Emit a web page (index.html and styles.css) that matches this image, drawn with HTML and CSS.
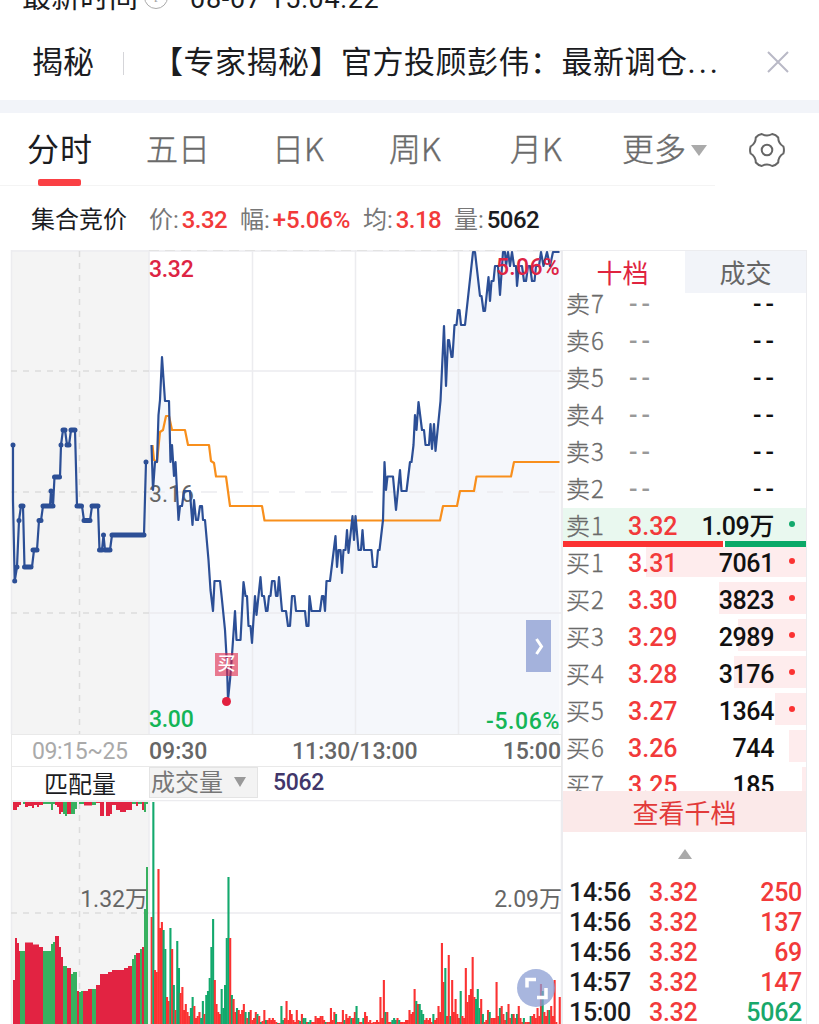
FILE: index.html
```html
<!DOCTYPE html>
<html lang="zh-CN">

<head>
	<meta charset="UTF-8">
	<title>分时</title>
	<link rel="stylesheet" href="styles.css">
</head>

<body>
	<div class="update">
		<span class="update-label">最新时间</span>
		<span class="info">i</span>
		<span class="update-time">08-07 15:04:22</span>
	</div>

	<div class="notice">
		<span class="notice-tag">揭秘</span>
		<span class="notice-line"></span>
		<span class="notice-text">【专家揭秘】官方投顾彭伟：最新调仓<span class="dots">...</span></span>
		<svg class="close" width="24" height="24" viewBox="0 0 24 24"><path d="M2 2 22 22M22 2 2 22" /></svg>
	</div>

	<div class="tabs">
		<span class="tab active">分时</span>
		<span class="tab">五日</span>
		<span class="tab">日K</span>
		<span class="tab">周K</span>
		<span class="tab">月K</span>
		<span class="tab more">更多<i class="caret"></i></span>
		<svg class="gear" width="38" height="38" viewBox="-19 -19 38 38">
			<path d="M16.400-3.500Q17.500 0 16.400 3.500Q11.300 6.500 11.200 12.500Q8.800 15.300 5.200 16Q0 13-5.200 16Q-8.800 15.300-11.200 12.500Q-11.300 6.500-16.400 3.500Q-17.500 0-16.400-3.500Q-11.300-6.500-11.200-12.500Q-8.800-15.300-5.200-16Q0-13 5.200-16Q8.800-15.300 11.200-12.500Q11.300-6.500 16.400-3.500Z" />
			<circle r="5.3" />
		</svg>
	</div>

	<div class="summary">
		<span class="summary-name">集合竞价</span>
		<span class="item">价:<b class="up">3.32</b></span>
		<span class="item wide">幅:<b class="up">+5.06%</b></span>
		<span class="item">均:<b class="up">3.18</b></span>
		<span class="item">量:<b>5062</b></span>
	</div>

	<div class="main">
		<div class="charts">
			<div class="price-chart">
				<svg width="552" height="484" viewBox="10 250 552 484">
					<rect class="pre-bg" x="11" y="250" width="138" height="484" />
					<path class="area" id="area" />
					<path class="grid" d="M149 371H562M149 613H562M252.5 250V734M355.5 250V734M458.5 250V734" />
					<path class="grid frame" d="M11 251H562M11.5 250V734M149 250V734M561.5 250V734" />
					<path class="grid dash-long" d="M149 492H562" />
					<path class="grid dash-top" d="M149 250H562" />
					<path class="grid dash" d="M11 371H149M11 492H149M11 613H149M79.5 251V734" />
					<text class="mid" x="149" y="502">3.16</text>
					<path class="avg" d="M152.500 445L154 460L157 462L160 432L163 430L166 416H169L172 430H185L188 445H209L211 461L214 463L216 476.500H226L230 506H262L264.500 520.500H440L443 506H457L460 491H474L476.500 476.500H511L514 462H559.500" />
					<path class="price" id="pre" />
					<path class="price-dots" d="M13 445h0M14.700 581h0M17 567h0M19 520.500h0M21 506H23M24.500 567H31M33 550H37M39 520.500H41M43 506H53M51 491h0M54.500 477H59.500M61 445h0M63 430H65M67 445H69M71 430H75M77 506H81.500M84 520.500H90M92 506H98M99.500 550H102M103.500 535h0M105 550H110M112 535H144M146 462h0" />
					<path class="price" id="price" />
				</svg>
				<span class="lab high">3.32</span>
				<span class="lab high-pct">5.06%</span>
				<span class="lab low">3.00</span>
				<span class="lab low-pct">-5.06%</span>
				<span class="buy">买</span>
				<span class="buy-dot"></span>
				<svg class="expand" width="25" height="52" viewBox="0 0 25 52"><path d="M10.500 19 15.500 26.500 10.500 34" /></svg>
			</div>
			<div class="axis">
				<span class="pre-time">09:15~25</span>
				<span class="t1">09:30</span>
				<span class="t2">11:30/13:00</span>
				<span class="t3">15:00</span>
			</div>
			<div class="vol-head">
				<span class="match">匹配量</span>
				<span class="vol-select">成交量<i class="caret"></i></span>
				<span class="vol-value">5062</span>
			</div>
			<div class="vol-chart">
				<svg width="552" height="224" viewBox="10 800 552 224">
					<rect class="pre-bg" x="11" y="800" width="138" height="224" />
					<path class="grid" d="M149 800.500H562M149 913H562" />
					<path class="grid frame" d="M11.500 800V1024M149 800V1024M561.500 800V1024M11 801H149" />
					<path class="grid dash" d="M11 913H149M79.500 803V1024" />
					<g id="preBars"></g>
					<g id="volBars"></g>
				</svg>
				<span class="lab pre-max">1.32万</span>
				<span class="lab vol-max">2.09万</span>
				<svg class="full" width="38" height="38" viewBox="0 0 38 38">
					<circle cx="19" cy="19" r="19" />
					<path d="M10 18.500V10.500H19M29 19V28.500H20" />
				</svg>
			</div>
		</div>

		<div class="side">
			<div class="side-tabs">
				<span class="on">十档</span>
				<span>成交</span>
			</div>
			<div class="book">
				<div class="levels" id="levels"></div>
				<div class="ratio"><i class="buys"></i><i class="sells"></i></div>
			</div>
			<div class="view-all">查看千档</div>
			<div class="fold"><i></i></div>
			<div class="deals" id="deals"></div>
		</div>
	</div>

	<script>
		const NS = 'http://www.w3.org/2000/svg';

		const pre = '13,445 13,500 14.7,581 17,567 19,520.5 21,506 23,506 24.5,567 32,567 34,550 37,550 39,520.5 41,520.5 43,506 50,506 51,491 53,506 54.5,477 60,477 61,445 63,430 65,430 67,445 69,445 71,430 75,430 77,506 82,506 84,520.5 90,520.5 92,506 98,506 99.5,550 102,550 103.500,535 105,550 110,550 112,535 144,535 146,462';

		const price = '151.5,445 153,490 155,462 157,462 158.5,415 160,400 162,357 165,401 169,401 170.5,462 172,445 174,476 175.5,462 178.5,520 180,506 182,506 184,491 190,491 191,506 192.5,525 194,500 196,520 198,520 200,506 202,506 203,520 205,520 208.5,560 210.5,590 213,611 214.5,581 220,581 222,600 225,630 227,665 228,700 230,680 232,655 235,611 236.5,640 240.5,640 243.5,582 245.5,596 247,596 248.5,626 250.5,626 252,643 255,596 256.5,615 260.5,577 262,596 264,596 266,611 267.5,611 269,596 270.5,596 272,581 274.5,581 276,596 277.5,596 279,577 282,611 286,611 288,626 290,626 292,596 294.5,596 296,611 305,611 306.5,626 308.5,626 309.5,596 311.5,611 320,611 322,596 323.5,596 325,611 326.5,581 330,581 335.5,536 337,567 338.5,550 340.5,550 342,573 343.5,550 345.5,550 347,530 348.5,553 352.5,516 354,540 355.5,516 358.5,550 361,550 362.5,530 364,550 371.5,550 373,567 376.5,567 378,550 379.5,550 383,520 384.5,462 386,490 387.5,476.5 393,476.5 396,510 400,470 401.5,491 406.5,491 410,462 411.5,462 413.5,445 415,415 416.5,430 418.5,402 422,430 424,430 425.5,445 429,445 430.5,424 432,449 434,424 435.5,451 440.5,401 444,326 446,386 448,340 449,340 451.5,357 452.5,357 454.5,325 456.5,325 458,310 459.5,310 461,325 465,325 473,252 475,252 480,296 481.5,296 483.5,311 485,311 488.5,277 490,301 491.5,281 493.5,281 495,266 498,266 500,295 503,252 505,252 506,266 508,252 510,266 512,252 514,266 516,266 517,286 519,266 522,266 524,281 526,281 528,266 530,266 532,281 534.5,281 536,266 539,266 541,252 543.5,266 547,252 550,266 553,252 559.5,252';

		document.getElementById('pre').setAttribute('d', 'M' + pre);
		document.getElementById('price').setAttribute('d', 'M' + price);
		document.getElementById('area').setAttribute('d', 'M149,734 149,445 ' + price + ' 559.5,734Z');

		function bar(parent, x, y, w, h, cls) {
			const r = document.createElementNS(NS, 'rect');
			r.setAttribute('x', x);
			r.setAttribute('y', y);
			r.setAttribute('width', w);
			r.setAttribute('height', h);
			r.setAttribute('class', cls);
			document.getElementById(parent).appendChild(r);
		}

		// call auction: left, right, edge, colour
		const preBottom = [[13,15,980,'r'],[15,17,938,'r'],[17,19,943,'r'],[19,20,951,'r'],[20,25,951,'g'],[25,33,942.5,'r'],[33,39,944.5,'r'],[39,43,947,'r'],[43,51,951,'g'],[51,53,944,'g'],[53,55,942,'g'],[55,59,936,'r'],[59,61,947,'r'],[61,63,957,'r'],[63,67,966,'g'],[67,71,968,'r'],[71,73,974,'g'],[73,77,972,'g'],[77,79,991,'r'],[79,81,992,'g'],[81,83,991,'g'],[83,88,991,'r'],[88,92,989,'r'],[92,96,989,'g'],[96,100,985,'r'],[100,108,974,'r'],[108,112,972,'r'],[112,124,970,'r'],[124,128,968,'r'],[128,132,966,'r'],[132,134,959,'g'],[134,136,955,'g'],[136,140,953,'r'],[140,142,949,'g'],[142,144,947,'r'],[144,146,909,'g'],[146,148,867,'g']];
		const preTop = [[13,17,810,'r'],[17,19,807,'r'],[19,21,805,'r'],[23,25,804,'g'],[25,28,807,'r'],[28,32,806,'r'],[32,34,808,'r'],[34,37,805,'r'],[37,39,807,'r'],[39,43,805,'r'],[43,51,804,'g'],[51,53,810,'g'],[53,55,804,'g'],[55,57,805,'r'],[57,59,807,'r'],[59,61,814,'r'],[61,63,812,'r'],[63,65,814,'g'],[65,67,816,'g'],[67,71,814,'r'],[71,75,814,'g'],[75,77,809,'g'],[79,84,804,'g'],[84,92,805.5,'r'],[92,96,805,'g'],[96,100,803,'r'],[100,104,816,'r'],[106,110,816,'r'],[110,112,814,'r'],[112,116,805,'r'],[116,120,810,'r'],[120,126,812,'r'],[126,132,810,'r'],[132,136,804,'g'],[136,138,806,'r'],[138,142,804,'g'],[142,144,810,'r'],[144,146,812,'g'],[146,148,804,'g']];
		preBottom.forEach(b => bar('preBars', b[0], b[2], b[1] - b[0], 1024 - b[2], 'pre-' + b[3]));
		preTop.forEach(b => bar('preBars', b[0], 802, b[1] - b[0], b[2] - 802, 'pre-' + b[3]));

		// per-minute volume, negative = falling
		const vol = [107,-222,54,52,155,96,102,-94,-75,27,23,-96,75,-39,14,-83,-56,31,37,14,20,12,8,-16,-27,18,6,8,12,-6,
			-23,10,-29,-33,-46,-77,-105,44,20,12,10,-35,-16,-39,-86,-147,86,-29,25,12,-16,14,10,14,20,-12,6,-12,14,4,
			6,12,-10,8,-2,3,14,-4,4,6,4,6,4,2,-1,1,-18,-4,6,23,4,14,10,4,2,14,4,-3,10,-6,
			-6,2,-2,-4,2,2,8,6,6,8,8,4,-2,2,2,16,4,12,-10,2,2,2,14,-4,10,6,8,-6,6,12,
			-18,-6,2,2,-6,12,8,2,4,1,2,2,4,2,27,6,44,-12,12,2,2,-4,-6,-4,6,-4,2,2,2,4,
			4,14,10,12,35,-23,20,-20,-14,-10,4,6,4,6,2,-10,4,6,18,12,81,42,-56,8,69,-8,44,12,25,10,
			6,-33,8,6,56,22,29,35,67,27,-25,-35,-16,25,-10,2,4,14,-12,6,6,6,42,8,-16,18,10,4,-12,20,
			6,-10,10,6,-10,18,6,2,-6,2,2,2,-8,8,10,6,16,8,40,-33,12,8,14,-14,18,8,44,2,0,27];
		vol.forEach((v, i) => bar('volBars', 150.6 + i * 1.7075, 1024 - Math.abs(v), 2.1, Math.abs(v), v < 0 ? 'down' : 'rise'));

		const levels = [['卖7'], ['卖6'], ['卖5'], ['卖4'], ['卖3'], ['卖2'], ['卖1', '3.32', '1.09万', 243],
			['买1', '3.31', '7061', 160], ['买2', '3.30', '3823', 87], ['买3', '3.29', '2989', 68], ['买4', '3.28', '3176', 72],
			['买5', '3.27', '1364', 31], ['买6', '3.26', '744', 17], ['买7', '3.25', '185', 4]];
		document.getElementById('levels').innerHTML = levels.map(([name, p, qty, w], i) => `
			<div class="level ${i < 7 ? 'sell' : 'bid'} ${p ? '' : 'empty'}">
				${p ? `<i class="depth" style="width:${w}px"></i>` : ''}
				<span class="name">${name[0]}<em>${name[1]}</em></span>
				<span class="p">${p || '--'}</span>
				<span class="qty">${qty || '--'}</span>
				${i > 5 && i < 12 ? '<i class="dot"></i>' : ''}
			</div>`).join('');

		const deals = [['14:56', 250], ['14:56', 137], ['14:56', 69], ['14:57', 147], ['15:00', 5062]];
		document.getElementById('deals').innerHTML = deals.map(([t, n], i) => `
			<div class="deal"><span>${t}</span><span class="up">3.32</span><span class="n ${i === 4 ? 'fall' : 'up'}">${n}</span></div>`).join('');
	</script>
</body>

</html>
```

FILE: styles.css
```css
* {
	box-sizing: border-box;
}

body {
	margin: 0;
	width: 819px;
	height: 1024px;
	overflow: hidden;
	background-color: #fff;
	color: #1b1c1f;
	font-family: Roboto, "Noto Sans CJK SC", sans-serif;
	white-space: nowrap;
}

i,
em {
	font-style: normal;
}

.up {
	color: #f23a3a;
}

.fall {
	color: #19a86b;
}

.update {
	display: flex;
	align-items: center;
	height: 40px;
	margin-top: -20px;
	padding-left: 22px;
	font-size: 29px;
	line-height: 40px;
}

.update-label {
	margin-top: -4px;
}

.info {
	width: 24px;
	height: 24px;
	margin: -7px 22px 0 6px;
	border: 1px solid #aaa;
	border-radius: 50%;
	color: #aaa;
	font: italic 17px/22px "Liberation Serif", serif;
	text-align: center;
}

.update-time {
	margin-top: -2px;
	font-size: 27px;
	letter-spacing: 0.75px;
}

.notice {
	display: flex;
	align-items: center;
	height: 93px;
	padding: 4px 29px 0 32px;
	border-bottom: 13px solid #f2f4f9;
	font-size: 31px;
	line-height: 40px;
}

.notice-tag {
	width: 91px;
	margin-top: 2px;
}

.notice-line {
	width: 1px;
	height: 23px;
	margin-top: 3px;
	background-color: #d5d5d9;
}

.notice-text {
	flex: 1;
	margin: 2px 0 0 28px;
	letter-spacing: 0.5px;
}

.dots {
	letter-spacing: 3px;
}

.close {
	fill: none;
	stroke: #b9b9c6;
	stroke-width: 2;
}

.tabs {
	display: grid;
	grid-template-columns: 119px 126px 117px 121px 112px 126px 40px;
	align-items: center;
	height: 73px;
	padding-left: 27px;
	background: linear-gradient(#f4f4f4, #f4f4f4) 0 100% / 715px 1px no-repeat;
}

.tab {
	position: relative;
	color: #6a6a6a;
	font-family: "Noto Sans CJK SC", sans-serif;
	font-size: 32px;
	font-weight: 300;
	line-height: 66px;
	padding-bottom: 6px;
	-webkit-text-stroke: 0.4px;
}

.tab.active {
	color: #1b1c1f;
	font-weight: 400;
	letter-spacing: 1px;
	-webkit-text-stroke: 0;
}

.tab.active::after {
	content: "";
	position: absolute;
	left: 11px;
	bottom: 0;
	width: 43px;
	height: 7px;
	border-radius: 2px;
	background-color: #fa4044;
}

.more .caret {
	display: inline-block;
	margin-left: 5px;
	border: 8.5px solid transparent;
	border-top: 11px solid #aaa;
	border-bottom: 0;
	vertical-align: 5px;
}

.gear {
	fill: none;
	stroke: #666;
	stroke-width: 2;
}

.summary {
	display: flex;
	align-items: center;
	height: 64px;
	padding: 4px 0 0 31px;
	font-size: 24px;
	line-height: 30px;
}

.summary-name {
	width: 118px;
}

.item {
	width: 91px;
	color: #777;
}

.item.wide {
	width: 123px;
}

.item b {
	margin-left: 3px;
	color: #1b1c1f;
	font-weight: 500;
	letter-spacing: -0.6px;
}

.item b.up {
	color: #f23a3a;
}

.item.wide b {
	letter-spacing: -0.2px;
}

.main {
	display: flex;
	margin-left: 10px;
}

.charts {
	width: 552px;
}

.charts svg {
	display: block;
}

.price-chart,
.vol-chart {
	position: relative;
}

.pre-bg {
	fill: #f4f4f4;
}

.area {
	fill: #f5f7fb;
}

.grid {
	fill: none;
	stroke: #ececef;
	stroke-width: 1.5;
}

.dash {
	stroke: #dcdcdc;
	stroke-dasharray: 6 6;
}

.dash-long {
	stroke-dasharray: 16 10;
}

.dash-top {
	stroke: #dedede;
	stroke-dasharray: 10 6;
}

.mid {
	fill: #666;
	font-size: 23px;
}

.price,
.avg {
	fill: none;
	stroke: #2c4f96;
	stroke-width: 2.2;
	stroke-linejoin: round;
}

.avg {
	stroke: #f88f1c;
}

.price-dots {
	fill: none;
	stroke: #2c4f96;
	stroke-width: 5;
	stroke-linecap: round;
}

.lab {
	position: absolute;
	font-size: 23px;
	font-weight: 500;
	line-height: 26px;
}

.high {
	left: 139px;
	top: 7px;
	color: #dd2444;
	letter-spacing: -0.3px;
}

.high-pct {
	right: 2px;
	top: 5px;
	color: #dd2444;
	letter-spacing: 0.3px;
}

.low {
	left: 139px;
	top: 457px;
	color: #14b557;
	letter-spacing: -0.3px;
}

.low-pct {
	right: 2px;
	top: 459px;
	color: #14b557;
	letter-spacing: 0.6px;
}

.buy {
	position: absolute;
	left: 205px;
	top: 403px;
	width: 23px;
	height: 23px;
	background-color: rgba(224, 36, 72, 0.6);
	color: #fff;
	font-size: 18px;
	font-weight: 500;
	line-height: 22px;
	text-align: center;
}

.buy-dot {
	position: absolute;
	left: 212px;
	top: 447px;
	width: 9px;
	height: 9px;
	border-radius: 50%;
	background-color: #e2203f;
}

.expand {
	position: absolute;
	right: 11px;
	top: 370px;
	background-color: #a4b2dc;
	fill: none;
	stroke: #fff;
	stroke-width: 3;
}

.axis {
	display: flex;
	align-items: center;
	height: 33px;
	margin-left: 1px;
	padding-top: 2px;
	border: 1px solid #e9e9e9;
	color: #666;
	font-size: 23px;
}

.pre-time {
	width: 137px;
	padding-left: 20px;
	color: #aaa;
	letter-spacing: -0.4px;
}

.t1 {
	width: 143px;
}

.t1,
.t2,
.t3 {
	font-weight: 500;
}

.t3 {
	margin-left: auto;
}

.vol-head {
	display: flex;
	height: 33px;
	margin-left: 1px;
	border-left: 1px solid #e9e9e9;
	border-right: 1px solid #e9e9e9;
	font-size: 24px;
	line-height: 36px;
}

.match {
	width: 137px;
	padding-left: 32px;
}

.vol-select {
	width: 109px;
	height: 31px;
	padding-left: 1px;
	border: 1px solid #e4e4e4;
	background-color: #f3f3f3;
	color: #777;
	line-height: 31px;
}

.vol-select .caret {
	display: inline-block;
	margin-left: 11px;
	border: 6px solid transparent;
	border-top: 10px solid #999;
	border-bottom: 0;
	vertical-align: 4px;
}

.vol-value {
	margin-left: 15px;
	color: #41366a;
	font-size: 23px;
	font-weight: 500;
	line-height: 32px;
	letter-spacing: -0.3px;
}

.pre-max {
	right: 414px;
	top: 87px;
	color: #666;
	font-weight: 400;
}

.vol-max {
	right: 0;
	top: 87px;
	color: #666;
	font-weight: 400;
}

.pre-r {
	fill: #e22342;
}

.pre-g {
	fill: #37b05f;
}

.rise {
	fill: #fb3232;
}

.down {
	fill: #13a96d;
}

.full {
	position: absolute;
	left: 507px;
	top: 169px;
}

.full circle {
	fill: #8b9dd3;
	fill-opacity: 0.75;
}

.full path {
	fill: none;
	stroke: #fff;
	stroke-width: 3.5;
}

.side {
	width: 245px;
	border: 1px solid #ececef;
	border-width: 1px 1px 0 1px;
}

.side-tabs {
	display: flex;
	height: 42px;
	font-size: 26px;
	line-height: 47px;
	text-align: center;
}

.side-tabs span {
	width: 121px;
	background-color: #f2f4f9;
	color: #666;
}

.side-tabs .on {
	width: 122px;
	padding-right: 3px;
	background-color: #fff;
	color: #e0243f;
}

.book {
	position: relative;
	height: 498px;
	overflow: hidden;
}

.levels {
	margin-top: -7px;
}

.level {
	position: relative;
	display: flex;
	height: 37px;
	font-size: 25px;
	font-weight: 500;
	line-height: 38px;
}

.level span {
	position: relative;
}

.depth {
	position: absolute;
	right: 0;
	top: 0;
	height: 32px;
	background-color: #feeced;
}

.sell .depth {
	height: 37px;
	background-color: #e9f8ef;
}

.name {
	width: 61px;
	padding-left: 3px;
	color: #6a6a6a;
	font-family: "Noto Sans CJK SC", sans-serif;
	font-size: 24px;
	font-weight: 300;
	line-height: 34px;
	-webkit-text-stroke: 0.3px;
}

.name em {
	margin-left: 1px;
}

.p {
	width: 62px;
	padding-left: 4px;
	color: #f23a3a;
}

.qty {
	width: 88px;
	text-align: right;
	color: #111;
	letter-spacing: -0.4px;
}

.empty .p {
	padding-left: 5px;
	color: #999;
}

.empty .p,
.empty .qty {
	letter-spacing: 4px;
}

.empty .qty {
	width: 92px;
}

.dot {
	position: absolute;
	right: 11px;
	top: 13px;
	width: 6px;
	height: 6px;
	border-radius: 50%;
	background-color: #fb3232;
}

.sell .dot {
	background-color: #13a96d;
}

.ratio {
	position: absolute;
	left: 0;
	right: 0;
	top: 248px;
	display: flex;
	gap: 2px;
	height: 6px;
	background-color: #fff;
}

.buys {
	width: 160px;
	background-color: #fb3232;
}

.sells {
	flex: 1;
	background-color: #0aa968;
}

.view-all {
	height: 41px;
	background-color: #fbe9e9;
	color: #e23a3a;
	font-size: 26px;
	line-height: 47px;
	text-align: center;
}

.fold {
	display: flex;
	align-items: center;
	justify-content: center;
	height: 44px;
}

.fold i {
	border: 7px solid transparent;
	border-bottom: 10px solid #aaa;
	border-top: 0;
}

.deal {
	display: flex;
	height: 30px;
	padding: 0 4px 0 6px;
	font-size: 25px;
	font-weight: 500;
	line-height: 34px;
	letter-spacing: -0.3px;
}

.deal span:first-child {
	width: 80px;
}

.deal .n {
	margin-left: auto;
}
```
